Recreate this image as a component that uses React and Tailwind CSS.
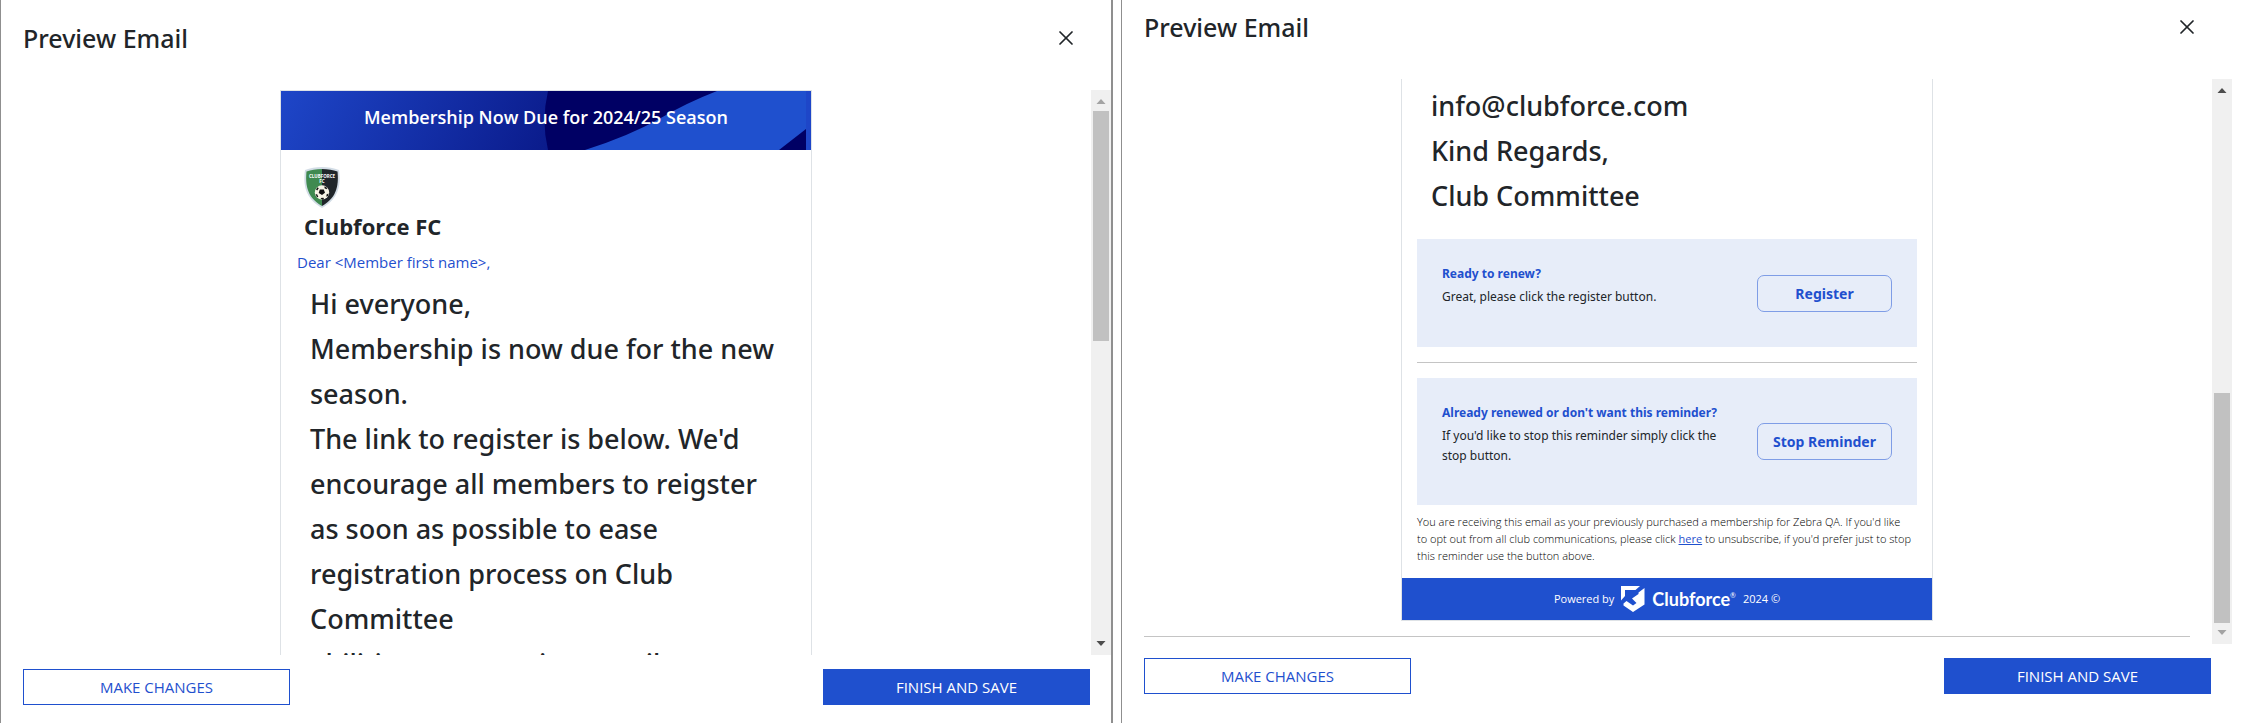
import { FiX } from "react-icons/fi";

const BODY = "font-['Noto_Sans',sans-serif] text-[27px] leading-[45px] font-medium whitespace-nowrap";

function Scrollbar({ atEnd = false }) {
  const on = "#4d4d4d", off = "#a3a3a3";
  return (
    <div aria-hidden="true" className="flex w-5 shrink-0 flex-col items-center bg-[#f0f0f0]">
      <svg viewBox="0 0 20 21" className="h-[21px] w-5 shrink-0">
        <path d="M5.5 14h9L10 9z" fill={atEnd ? on : off} />
      </svg>
      <div className={`flex min-h-0 w-4 flex-1 flex-col ${atEnd ? "justify-end" : "justify-start"}`}>
        <div className="h-[44%] bg-[#c1c1c1]" />
      </div>
      <svg viewBox="0 0 20 21" className="h-[21px] w-5 shrink-0">
        <path d="M5.5 7h9L10 12z" fill={atEnd ? off : on} />
      </svg>
    </div>
  );
}

function Header() {
  return (
    <header className="flex shrink-0 items-center justify-between pr-[33px] pl-[22px]">
      <h2 className="font-['Noto_Sans',sans-serif] text-[25px] leading-8 font-medium">Preview Email</h2>
      <button type="button" aria-label="Close" className="flex items-center justify-center">
        <FiX className="size-6" strokeWidth={1.75} />
      </button>
    </header>
  );
}

function Footer() {
  return (
    <footer className="flex shrink-0 justify-between pr-[21px] pl-[22px]">
      <button type="button" className="h-9 w-[267px] border border-[#1f50ce] text-[15px] text-[#1f50ce]">
        MAKE CHANGES
      </button>
      <button type="button" className="h-9 w-[267px] bg-[#1f50ce] text-[15px] text-white">
        FINISH AND SAVE
      </button>
    </footer>
  );
}

function Banner() {
  return (
    <div className="relative h-[59px]">
      <svg viewBox="0 0 530 59" preserveAspectRatio="none" className="absolute inset-0 size-full">
        <defs>
          <linearGradient id="bannerFade" x1="0" y1="0" x2="1" y2="0.1">
            <stop offset="0" stopColor="#1e46c8" />
            <stop offset="1" stopColor="#0a1a8a" />
          </linearGradient>
        </defs>
        <rect width="530" height="59" fill="#1f50ce" />
        <path d="M0 0H300V59H0z" fill="url(#bannerFade)" />
        <path d="M267 0Q260 30 267 59H304Q348 45 378 28Q405 12 436 0z" fill="#000064" />
        <path d="M498 59L525 38V59z" fill="#000064" />
        <path d="M525 0h5v59h-5z" fill="#1e46c8" />
      </svg>
      <h3 className="relative pt-[14px] text-center text-[18px] leading-6 font-semibold text-white">
        Membership Now Due for 2024/25 Season
      </h3>
    </div>
  );
}

function Crest() {
  return (
    <svg viewBox="0 0 36 42" className="h-[42px] w-9">
      <path d="M18 0C12 0 6 1 1 3C-.5 14 -1 31 18 41C37 31 36.500 14 35 3C30 1 24 0 18 0z" fill="#d3dde6" />
      <path d="M18 2C12 2 7 3 2.500 4.500C1.500 15 1.500 30 18 39z" fill="#3f8a50" />
      <path d="M18 2C24 2 29 3 33.500 4.500C34.500 15 34.500 30 18 39z" fill="#20262a" />
      <text x="18" y="10.500" textAnchor="middle" fontSize="4.500" fontWeight="700" fill="#fff">CLUBFORCE</text>
      <text x="18" y="15.500" textAnchor="middle" fontSize="4.500" fontWeight="700" fill="#fff">FC</text>
      <circle cx="18" cy="25.500" r="7.200" fill="#f7f5e6" />
      <path d="M15.800 22.500l4 0l1.200 3.300l-3 2.200l-3.300-2zM12 22.500l1.500-2.200l1.300 1l-1.600 2.200zM20.500 19.200l2.800 1.800l-.8 1.200l-2-1zM11.500 27l1.800.5l1 2.500l-1.300.3zM16.500 31l3-.3l.5 1.500l-2 .6zM22.500 27.500l2-1l-.3 2.300l-1.800 1z" fill="#111" />
    </svg>
  );
}

function ForceMark() {
  return (
    <svg viewBox="0 0 24 26" className="h-[26px] w-6" fill="#fff">
      <path d="M0 0H19L14.500 4H4V10L0 14.500z" />
      <path d="M23.500 2V18.500L12 26L2.500 19.500V17.500L5.500 15L12 19.500L15.500 17L11 12.500L17.500 8V6.500z" />
    </svg>
  );
}

function Reminder({ title, text, action, className }) {
  return (
    <div className={`flex items-center justify-between bg-[#e7edf9] px-[25px] font-['Noto_Sans',sans-serif] ${className}`}>
      <div className="self-start pt-[25px] text-[12px] leading-5">
        <h4 className="mb-[3px] font-bold text-[#1f50ce]">{title}</h4>
        <p>{text}</p>
      </div>
      <button
        type="button"
        className="h-[37px] w-[135px] shrink-0 rounded-[7px] border border-[#7f9de6] text-[14px] font-bold text-[#1f50ce]"
      >
        {action}
      </button>
    </div>
  );
}

function MessageTop() {
  return (
    <div className="w-[532px] shrink-0 border border-[#dee2e6]">
      <Banner />
      <div className="px-[23px] pt-[17px]">
        <Crest />
        <h4 className="text-[22px] leading-[34px] font-bold">Clubforce FC</h4>
      </div>
      <p className="my-[3px] px-4 text-[15px] leading-8 text-[#1f50ce]">Dear &lt;Member first name&gt;,</p>
      <div className={`px-[29px] ${BODY}`}>
        <p>Hi everyone,</p>
        <p>Membership is now due for the new<br />season.</p>
        <p>
          The link to register is below. We'd<br />
          encourage all members to reigster<br />
          as soon as possible to ease<br />
          registration process on Club<br />
          Committee
        </p>
        <p>abilities, any queries, email us at</p>
      </div>
    </div>
  );
}

function MessageEnd() {
  return (
    <div className="w-[532px] shrink-0 border border-[#dee2e6]">
      <div className={`px-[29px] pt-5 ${BODY}`}>
        <p>info@clubforce.com</p>
        <p>Kind Regards,</p>
        <p>Club Committee</p>
      </div>
      <div className="px-[15px] pt-[21px]">
        <Reminder
          className="h-[108px]"
          title="Ready to renew?"
          text="Great, please click the register button."
          action="Register"
        />
        <hr className="my-[15px] border-[#c4c4c4]" />
        <Reminder
          className="h-[127px]"
          title="Already renewed or don't want this reminder?"
          text={<>If you'd like to stop this reminder simply click the<br />stop button.</>}
          action="Stop Reminder"
        />
        <p className="pt-2 pb-[14px] text-[11px] leading-[17px] font-light whitespace-nowrap text-black">
          You are receiving this email as your previously purchased a membership for Zebra QA. If you'd like<br />
          to opt out from all club communications, please click{" "}
          <a href="#unsubscribe" className="font-normal text-[#1f50ce] underline">here</a> to unsubscribe, if you'd prefer just to stop<br />
          this reminder use the button above.
        </p>
      </div>
      <div className="flex h-[42px] items-center justify-center gap-[7px] bg-[#1f50ce] text-[11px] font-medium text-white">
        <span>Powered by</span>
        <ForceMark />
        <span className="flex items-start font-['Lato',sans-serif] text-[18px] leading-5 font-bold">
          Clubforce<sup className="top-0 text-[7px] leading-3 font-normal">®</sup>
        </span>
        <span>2024 ©</span>
      </div>
    </div>
  );
}

export default function App() {
  return (
    <main className="flex h-screen gap-2 overflow-hidden bg-white pr-3 font-['Open_Sans',sans-serif] text-[#212529]">
      <section className="flex min-w-0 flex-1 flex-col border-r-2 border-l border-[#8f8f8f] pt-[22px] pb-[18px]">
        <Header />
        <div className="mt-9 mb-[14px] flex min-h-0 flex-1">
          <div className="flex flex-1 items-start justify-center overflow-hidden">
            <MessageTop />
          </div>
          <Scrollbar />
        </div>
        <Footer />
      </section>

      <section className="flex min-w-0 flex-1 flex-col border-l border-[#8f8f8f] pt-[11px] pb-[29px]">
        <Header />
        <div className="mt-9 mb-[14px] flex min-h-0 flex-1">
          <div className="flex flex-1 flex-col items-center justify-end overflow-hidden px-[22px]">
            <MessageEnd />
            <hr className="mt-[15px] mb-[7px] w-full border-[#c4c4c4]" />
          </div>
          <Scrollbar atEnd />
        </div>
        <Footer />
      </section>
    </main>
  );
}
